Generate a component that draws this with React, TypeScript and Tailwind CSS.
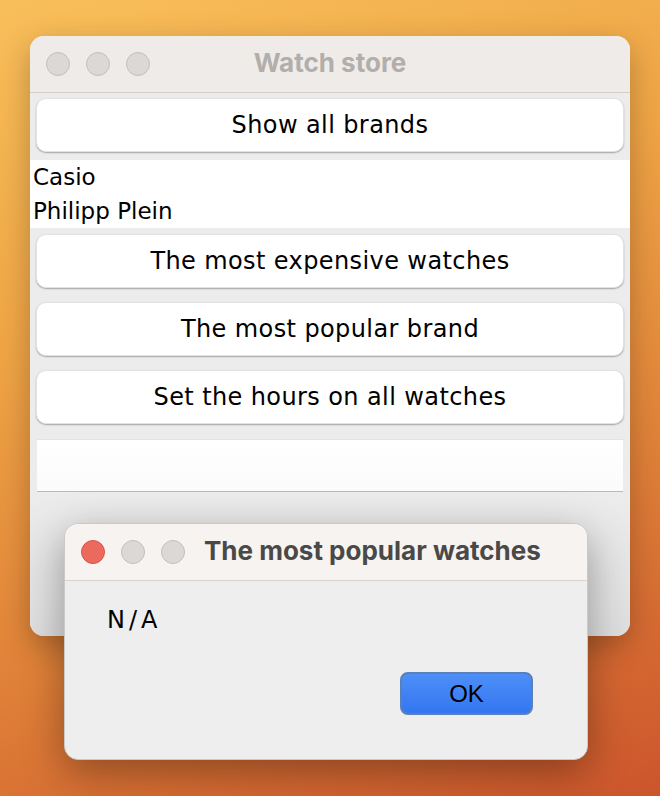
import React from "react";

const BODY = "font-['DejaVu_Sans',sans-serif]";
const TITLE = "font-['Inter','Liberation_Sans',sans-serif]";

function Lights({ active = false }: { active?: boolean }) {
  return (
    <div className="flex items-center gap-[16px]">
      <span
        className={
          active
            ? "w-[24px] h-[24px] rounded-full bg-[#ec695e] border border-[#d6544a]"
            : "w-[24px] h-[24px] rounded-full bg-[#dcd8d5] border border-[#c4c0bd]"
        }
      />
      <span className="w-[24px] h-[24px] rounded-full bg-[#dcd8d5] border border-[#c4c0bd]" />
      <span className="w-[24px] h-[24px] rounded-full bg-[#dcd8d5] border border-[#c4c0bd]" />
    </div>
  );
}

function SwingButton({ label }: { label: string }) {
  return (
    <button
      className={`${BODY} h-[54px] mx-[6px] rounded-[10px] bg-white border border-[#e2e2e2] shadow-[0_1px_1.5px_rgba(0,0,0,0.3)] text-[24px] tracking-[0.4px] text-black`}
    >
      {label}
    </button>
  );
}

export default function App() {
  const brands = ["Casio", "Philipp Plein"];

  return (
    <div className="relative w-[660px] h-[796px] overflow-hidden bg-[linear-gradient(160deg,#f8bf5a_0%,#efa445_35%,#e2863a_62%,#cc552c_100%)]">
      {/* ── Main window ── */}
      <div className="absolute left-[30px] top-[36px] w-[600px] h-[600px] rounded-[14px] overflow-hidden bg-[#ececec] shadow-[0_10px_30px_rgba(0,0,0,0.25)] flex flex-col">
        <div className="relative h-[57px] shrink-0 bg-[#efebe8] border-b border-[#d3cfcc] flex items-center px-[16px]">
          <Lights />
          <span
            className={`${TITLE} absolute inset-x-0 pb-[4px] text-center font-bold text-[26px] text-[#b2aeab] pointer-events-none`}
          >
            Watch store
          </span>
        </div>

        <div className="flex flex-col pt-[5px]">
          <SwingButton label="Show all brands" />

          <div className={`${BODY} mt-[8px] bg-white h-[68px] px-[3px] flex flex-col text-[23px] leading-[34px] text-black`}>
            {brands.map((b) => (
              <span key={b}>{b}</span>
            ))}
          </div>

          <div className="flex flex-col gap-[14px] mt-[6px]">
            <SwingButton label="The most expensive watches" />
            <SwingButton label="The most popular brand" />
            <SwingButton label="Set the hours on all watches" />
          </div>

          <div className="mx-[7px] mt-[15px] h-[53px] bg-[linear-gradient(#ffffff,#fbfbfb)] border-t border-[#e4e4e4] border-b border-b-[#b9b9b9]" />
        </div>

        <div className="flex-1 bg-[linear-gradient(#ececec,#dedede)]" />
      </div>

      {/* ── Dialog ── */}
      <div className="absolute left-[64px] top-[523px] w-[524px] h-[237px] rounded-[14px] overflow-hidden bg-[#eeeeee] border border-[#c9c9c9] shadow-[0_12px_40px_rgba(0,0,0,0.35)] flex flex-col">
        <div className="h-[57px] shrink-0 bg-[#f7f3f1] border-b border-[#d6d2d0] flex items-center gap-[19px] px-[16px]">
          <Lights active />
          <span className={`${TITLE} pb-[4px] font-bold text-[26px] text-[#4b4948]`}>
            The most popular watches
          </span>
        </div>
        <div className="flex-1 flex flex-col px-[42px] pt-[27px]">
          <span className={`${BODY} text-[24px] tracking-[4px] text-black leading-none`}>N/A</span>
          <div className="flex justify-end mt-[40px] pr-[12px]">
            <button
              className={`w-[133px] h-[43px] rounded-[8px] border-2 border-[#5b7fb8] bg-[linear-gradient(#4d8ff7,#3476f0)] font-['Liberation_Sans',sans-serif] text-[24px] text-black`}
            >
              OK
            </button>
          </div>
        </div>
      </div>
    </div>
  );
}
